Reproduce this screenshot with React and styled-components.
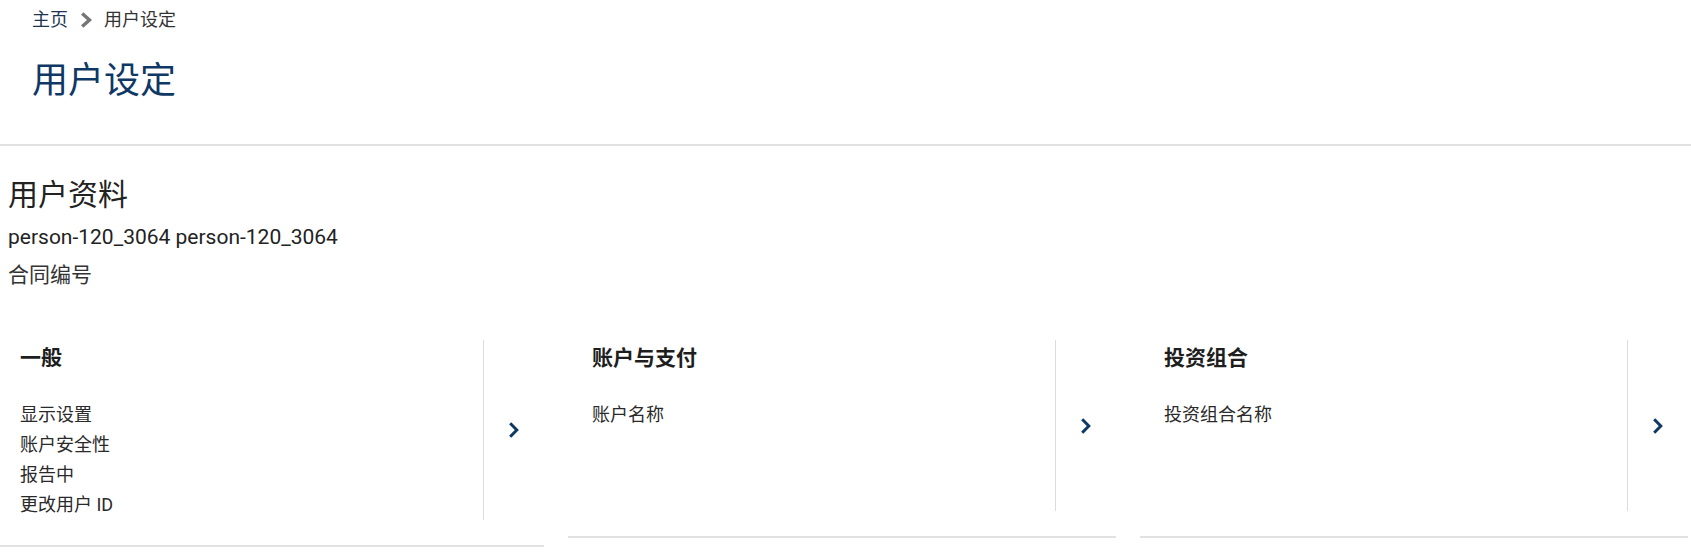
import React from "react";
import styled, { createGlobalStyle } from "styled-components";

const Global = createGlobalStyle`
  html, body {
    margin: 0;
    padding: 0;
    background: #ffffff;
  }
  body {
    font-family: Roboto, "Noto Sans CJK SC", sans-serif;
    color: #222222;
  }
`;

const Page = styled.div`
  width: 1691px;
  overflow: hidden;
`;

const Header = styled.header`
  padding: 8px 32px 41px;
  border-bottom: 2px solid #e2e2e2;
`;

const Breadcrumb = styled.nav`
  display: flex;
  align-items: center;
  height: 24px;
  font-size: 18px;
  line-height: 24px;
`;

const Crumb = styled.span`
  color: ${(p) => (p.$link ? "#1d3550" : "#333333")};
`;

const CrumbSep = styled.svg`
  width: 13px;
  height: 16px;
  margin: 0 11px 0 12px;
  flex: none;
`;

const Title = styled.h1`
  margin: 27px 0 0;
  font-size: 36px;
  line-height: 44px;
  font-weight: 400;
  color: #0f3865;
`;

const Profile = styled.section`
  padding: 29px 8px 0;
`;

const ProfileTitle = styled.h2`
  margin: 0;
  font-size: 30px;
  line-height: 40px;
  font-weight: 400;
  color: #222222;
`;

const ProfileLine = styled.div`
  font-size: 21px;
  line-height: 30px;
  color: ${(p) => (p.$muted ? "#333333" : "#222222")};
  margin-top: ${(p) => p.$gap || 0}px;
`;

const Cards = styled.div`
  display: grid;
  grid-template-columns: 544px 548px 548px;
  column-gap: 24px;
  align-items: start;
  margin-top: 50px;
`;

const Card = styled.article`
  display: flex;
  padding-bottom: 25px;
  border-bottom: 2px solid #e2e2e2;
`;

const CardBody = styled.div`
  flex: 1;
  min-height: 167px;
  padding: 4px 0 0 ${(p) => p.$inset}px;
  border-right: 1px solid #dcdcdc;
`;

const CardTitle = styled.h3`
  margin: 0 0 28px;
  font-size: 21px;
  line-height: 28px;
  font-weight: 700;
  color: #1e1e1e;
`;

const CardItem = styled.div`
  font-size: 18px;
  line-height: 30px;
  color: #2a2a2a;
`;

const CardArrow = styled.div`
  width: 60px;
  flex: none;
  display: flex;
  align-items: center;
  justify-content: center;
`;

const ArrowIcon = styled.svg`
  width: 12px;
  height: 18px;
`;

const Chevron = ({ color }) => (
  <ArrowIcon viewBox="0 0 12 18" aria-hidden="true">
    <path
      d="M2.2 2.2 L8.8 9 L2.2 15.8"
      fill="none"
      stroke={color}
      strokeWidth="3"
      strokeLinejoin="miter"
    />
  </ArrowIcon>
);

const cards = [
  {
    title: "一般",
    inset: 20,
    items: ["显示设置", "账户安全性", "报告中", "更改用户 ID"],
  },
  { title: "账户与支付", inset: 24, items: ["账户名称"] },
  { title: "投资组合", inset: 24, items: ["投资组合名称"] },
];

export default function App() {
  return (
    <Page>
      <Global />
      <Header>
        <Breadcrumb>
          <Crumb $link>主页</Crumb>
          <CrumbSep viewBox="0 0 13 16" aria-hidden="true">
            <path
              d="M2.2 1.5 L9.5 8 L2.2 14.5"
              fill="none"
              stroke="#767676"
              strokeWidth="3.4"
            />
          </CrumbSep>
          <Crumb>用户设定</Crumb>
        </Breadcrumb>
        <Title>用户设定</Title>
      </Header>
      <Profile>
        <ProfileTitle>用户资料</ProfileTitle>
        <ProfileLine $gap={7}>person-120_3064 person-120_3064</ProfileLine>
        <ProfileLine $gap={8} $muted>合同编号</ProfileLine>
      </Profile>
      <Cards>
        {cards.map((c) => (
          <Card key={c.title}>
            <CardBody $inset={c.inset}>
              <CardTitle>{c.title}</CardTitle>
              {c.items.map((it) => (
                <CardItem key={it}>{it}</CardItem>
              ))}
            </CardBody>
            <CardArrow>
              <Chevron color="#0f3865" />
            </CardArrow>
          </Card>
        ))}
      </Cards>
    </Page>
  );
}
